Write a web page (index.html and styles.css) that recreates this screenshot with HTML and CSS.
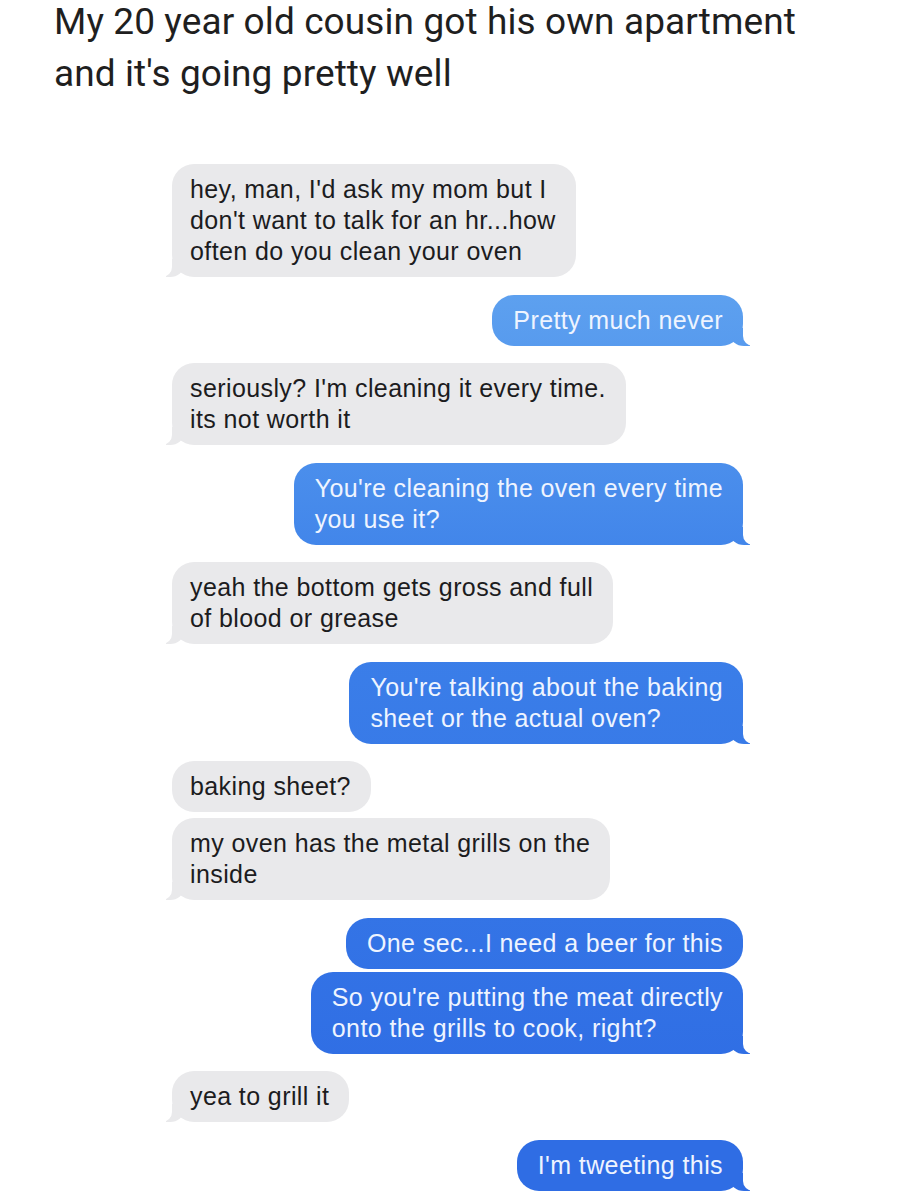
FILE: index.html
```html
<!DOCTYPE html>
<html lang="en">
  <head>
    <meta charset="UTF-8" />
    <meta name="viewport" content="width=device-width, initial-scale=1.0" />
    <title>Oven</title>
    <link rel="stylesheet" href="styles.css">
  </head>
  <body>
    <div class="post">
      <h1 class="title">My 20 year old cousin got his own apartment<br />and it's going pretty well</h1>

      <div class="chat">
        <p class="msg them">hey, man, I'd ask my mom but I<br />don't want to talk for an hr...how<br />often do you clean your oven</p>
        <p class="msg me">Pretty much never</p>
        <p class="msg them">seriously? I'm cleaning it every time.<br />its not worth it</p>
        <p class="msg me">You're cleaning the oven every time<br />you use it?</p>
        <p class="msg them">yeah the bottom gets gross and full<br />of blood or grease</p>
        <p class="msg me">You're talking about the baking<br />sheet or the actual oven?</p>
        <p class="msg them no-tail">baking sheet?</p>
        <p class="msg them close">my oven has the metal grills on the<br />inside</p>
        <p class="msg me no-tail">One sec...I need a beer for this</p>
        <p class="msg me closer">So you're putting the meat directly<br />onto the grills to cook, right?</p>
        <p class="msg them">yea to grill it</p>
        <p class="msg me">I'm tweeting this</p>
      </div>
    </div>
  </body>
</html>
```

FILE: styles.css
```css
* {
  margin: 0;
  padding: 0;
  box-sizing: border-box;
}
body {
  background-color: #ffffff;
  font-family: "Liberation Sans", Arial, sans-serif;
  height: 1200px;
  overflow: hidden;
}
.post {
  width: 898px;
}
.title {
  font-family: Roboto, "Liberation Sans", sans-serif;
  font-weight: 400;
  font-size: 37px;
  line-height: 52px;
  color: #1f1f1f;
  letter-spacing: 0.1px;
  padding: 0 0 0 54px;
  margin-top: -4px;
}
.chat {
  display: flex;
  flex-direction: column;
  padding: 64px 155px 0 172px;
}
.msg {
  position: relative;
  font-size: 25px;
  line-height: 31px;
  letter-spacing: 0.4px;
  padding: 10px 20px 10px 18px;
  border-radius: 22px;
  margin-top: 17.5px;
}
.msg:first-child {
  margin-top: 0;
}
.them {
  align-self: flex-start;
  background-color: #e9e9eb;
  color: #1c1c1e;
}
.me {
  align-self: flex-end;
  padding-left: 21px;
  color: #eef4ff;
  background-image: linear-gradient(to bottom, #62a5f0 250px, #3c80e9 600px, #2f6de4 1100px);
  background-attachment: fixed;
}
.close {
  margin-top: 6px;
}
.closer {
  margin-top: 3px;
}
/* little tails at the bottom corner */
.them::before {
  content: "";
  position: absolute;
  left: -6px;
  bottom: 0;
  width: 18px;
  height: 18px;
  background-color: #e9e9eb;
  border-bottom-right-radius: 14px 12px;
}
.them::after {
  content: "";
  position: absolute;
  left: -12px;
  bottom: 0;
  width: 12px;
  height: 20px;
  background-color: #ffffff;
  border-bottom-right-radius: 10px;
}
.me::before {
  content: "";
  position: absolute;
  right: -7px;
  bottom: 0;
  width: 20px;
  height: 18px;
  background-image: linear-gradient(to bottom, #62a5f0 250px, #3c80e9 600px, #2f6de4 1100px);
  background-attachment: fixed;
  border-bottom-left-radius: 14px 12px;
}
.me::after {
  content: "";
  position: absolute;
  right: -13px;
  bottom: 0;
  width: 13px;
  height: 20px;
  background-color: #ffffff;
  border-bottom-left-radius: 10px;
}
.no-tail::before,
.no-tail::after {
  display: none;
}
```
